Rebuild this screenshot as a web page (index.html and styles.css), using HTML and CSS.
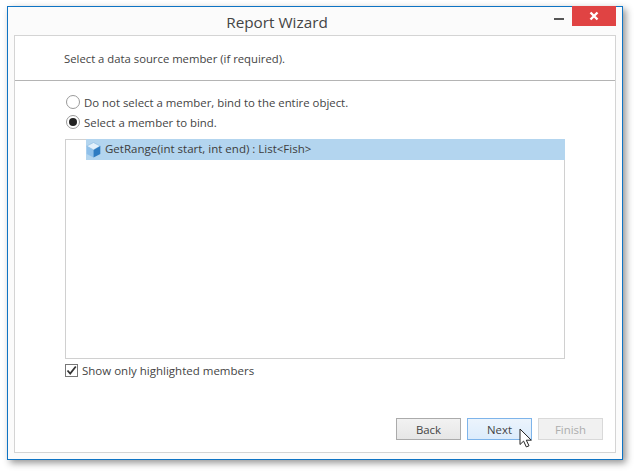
FILE: index.html
```html
<!DOCTYPE html>
<html lang="en">
<head>
<meta charset="utf-8">
<title>Report Wizard</title>
<link rel="stylesheet" href="styles.css">
</head>
<body>
<div class="window">
  <div class="titlebar">
    <span class="title">Report Wizard</span>
    <span class="minimize"></span>
    <span class="close">
      <svg width="10" height="10" viewBox="0 0 10 10"><path d="M1.500 1.500l7 7M8.500 1.500l-7 7" stroke="#fff" stroke-width="2.400" fill="none"/></svg>
    </span>
  </div>
  <div class="panel">
    <div class="header">Select a data source member (if required).</div>
    <div class="content">
      <label class="option"><span class="radio"></span>Do not select a member, bind to the entire object.</label>
      <label class="option"><span class="radio checked"></span>Select a member to bind.</label>
      <div class="tree">
        <div class="row">
          <svg class="cube" width="15" height="16" viewBox="0 0 15 16">
            <path d="M7.500.5l6.800 3.600-6.800 3.800L.7 4.100z" fill="#e2f0fb" stroke="#8fbde3" stroke-width=".7"/>
            <path d="M.7 4.100l6.800 3.800v7.600L.7 11.900z" fill="#8fc0ea"/>
            <path d="M14.300 4.100L7.500 7.900v7.600l6.800-3.600z" fill="#2f7cc2"/>
          </svg>
          <span>GetRange(int start, int end) : List&lt;Fish&gt;</span>
        </div>
      </div>
      <label class="check">
        <span class="box"><svg width="11" height="11" viewBox="0 0 11 11"><path d="M1.500 5.500l2.700 3L9.800 1.500" stroke="#333" stroke-width="1.800" fill="none"/></svg></span>
        Show only highlighted members
      </label>
    </div>
    <div class="buttons">
      <button class="btn">Back</button>
      <button class="btn hover">Next</button>
      <button class="btn disabled">Finish</button>
    </div>
    <svg class="cursor" width="14" height="21" viewBox="0 0 14 21"><path d="M1 1v15.500l3.600-3.400 2.700 5.800 2.700-1.100-2.700-5.600h5z" fill="#fff" stroke="#222" stroke-width="1"/></svg>
  </div>
</div>
</body>
</html>
```
FILE: styles.css
```css
* { box-sizing: border-box; }
html, body { margin: 0; padding: 0; }
body {
  width: 636px;
  height: 474px;
  background: #fff;
  padding: 6px 0 0 7px;
  overflow: hidden;
  font-family: "Open Sans", "Noto Sans", sans-serif;
  font-size: 11.400px;
  color: #444;
}
.window {
  width: 616px;
  height: 454px;
  background: #fbfbfb;
  border: 1px solid #0f74c4;
  box-shadow: 3px 3px 7px rgba(0,0,0,.42);
  padding: 0 6px 6px;
  display: flex;
  flex-direction: column;
}
.titlebar {
  height: 28px;
  flex: none;
  display: flex;
  align-items: flex-start;
  position: relative;
}
.title {
  position: absolute;
  left: 0;
  right: 76px;
  top: 5px;
  text-align: center;
  font-size: 15.300px;
  line-height: 20px;
  color: #444;
}
.minimize {
  position: absolute;
  right: 52px;
  top: 11px;
  width: 10px;
  height: 2px;
  background: #555;
}
.close {
  position: absolute;
  right: 0;
  top: -1px;
  width: 44px;
  height: 20px;
  background: #e04343;
  display: flex;
  align-items: center;
  justify-content: center;
}
.panel {
  flex: 1;
  position: relative;
  background: #fff;
  border: 1px solid #d4d4d4;
  display: flex;
  flex-direction: column;
}
.header {
  height: 45px;
  flex: none;
  border-bottom: 1px solid #b4b4b4;
  padding: 14px 0 0 49px;
  line-height: 17px;
  font-size: 11.300px;
}
.content {
  flex: 1;
  padding: 11px 50px 0 50px;
  display: flex;
  flex-direction: column;
}
.option {
  display: flex;
  align-items: center;
  height: 20px;
  line-height: 17px;
}
.radio {
  width: 14px;
  height: 14px;
  margin: 0 4px 0 1px;
  border: 1px solid #9a9a9a;
  border-radius: 50%;
  background: #fff;
  flex: none;
  display: flex;
  align-items: center;
  justify-content: center;
}
.radio.checked::after {
  content: "";
  width: 8px;
  height: 8px;
  border-radius: 50%;
  background: #222;
}
.tree {
  margin-top: 7px;
  height: 220px;
  flex: none;
  border: 1px solid #d0d0d0;
  padding-left: 20px;
}
.row {
  height: 21px;
  margin: -1px -1px 0 0;
  background: #b3d5ef;
  display: flex;
  align-items: center;
  gap: 4px;
  padding: 0 0 2px 0;
  line-height: 17px;
  color: #3c3c3c;
  font-size: 11.500px;
}
.cube { flex: none; margin-top: 3px; }
.check {
  margin-top: 3px;
  display: flex;
  align-items: center;
  height: 17px;
  line-height: 17px;
  font-size: 11.500px;
}
.box {
  width: 13px;
  height: 13px;
  margin-right: 4px;
  border: 1px solid #777;
  background: #fff;
  flex: none;
  display: flex;
  align-items: center;
  justify-content: center;
}
.buttons {
  flex: none;
  display: flex;
  justify-content: flex-end;
  gap: 6px;
  padding: 0 12px 12px 0;
}
.btn {
  width: 65px;
  height: 22px;
  padding: 0;
  font: inherit;
  color: #444;
  border: 1px solid #ababab;
  background: linear-gradient(#f2f2f2, #e6e6e6);
}
.btn.hover {
  border-color: #7eb4ea;
  background: linear-gradient(#ecf4fc, #dcecfc);
}
.btn.disabled {
  border-color: #d9d9d9;
  background: #f1f1f1;
  color: #adadad;
}
.cursor {
  position: absolute;
  left: 504px;
  top: 392px;
}
```
